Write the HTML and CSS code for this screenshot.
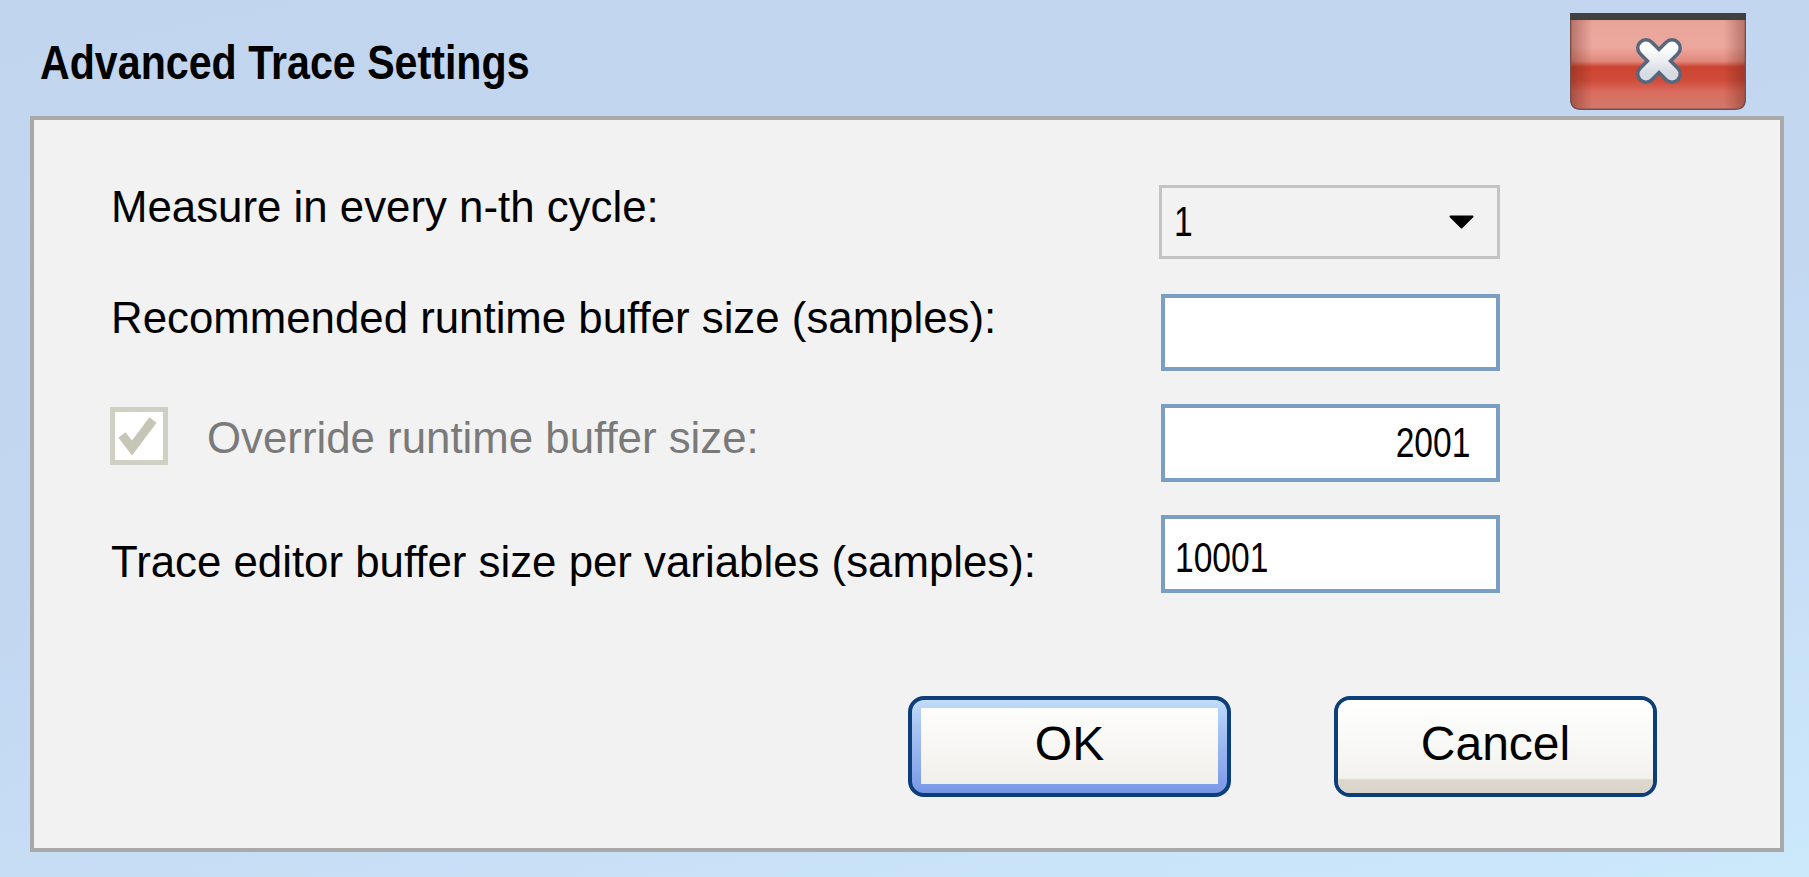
FILE: index.html
```html
<!DOCTYPE html>
<html lang="en">
<head>
<meta charset="utf-8">
<title>Advanced Trace Settings</title>
<link rel="stylesheet" href="styles.css">
</head>
<body>
<div class="window">
  <header class="titlebar">
    <h1 class="title">Advanced Trace Settings</h1>
    <button class="close" type="button" aria-label="Close">
      <svg width="176" height="97" viewBox="0 0 176 97">
        <defs>
          <linearGradient id="cb" x1="0" y1="0" x2="0" y2="1">
            <stop offset="0" stop-color="#d98a80"/>
            <stop offset="0.1" stop-color="#eaa59b"/>
            <stop offset="0.35" stop-color="#eda89e"/>
            <stop offset="0.5" stop-color="#e28a7e"/>
            <stop offset="0.56" stop-color="#cc4431"/>
            <stop offset="0.7" stop-color="#cf4c3a"/>
            <stop offset="0.82" stop-color="#da6c5e"/>
            <stop offset="1" stop-color="#d07a6c"/>
          </linearGradient>
          <linearGradient id="cv" x1="0" y1="0" x2="1" y2="0">
            <stop offset="0" stop-color="#5a1a10" stop-opacity="0.35"/>
            <stop offset="0.12" stop-color="#5a1a10" stop-opacity="0"/>
            <stop offset="0.88" stop-color="#5a1a10" stop-opacity="0"/>
            <stop offset="1" stop-color="#5a1a10" stop-opacity="0.35"/>
          </linearGradient>
          <linearGradient id="xg" x1="0" y1="0" x2="0" y2="1">
            <stop offset="0" stop-color="#ffffff"/>
            <stop offset="1" stop-color="#d6dae2"/>
          </linearGradient>
        </defs>
        <path d="M0.75 0 H175.25 V86 Q175.25 96.25 165 96.25 H11 Q0.75 96.25 0.75 86 Z" fill="url(#cb)" stroke="#7a4c46" stroke-width="1.5"/>
        <path d="M1.5 0 H174.5 V86 Q174.5 95.5 165 95.5 H11 Q1.5 95.5 1.5 86 Z" fill="url(#cv)"/>
        <rect x="0" y="0" width="176" height="7" fill="#404040"/>
        <g stroke-linecap="round" fill="none">
          <path d="M76 35 L102 61 M102 35 L76 61" stroke="#56667c" stroke-width="20"/>
          <path d="M76 35 L102 61 M102 35 L76 61" stroke="url(#xg)" stroke-width="13"/>
        </g>
      </svg>
    </button>
  </header>

  <main class="panel">
    <div class="form">
      <div class="row row-cycle">
        <span class="label">Measure in every n-th cycle:</span>
        <div class="select">
          <span class="narrow">1</span>
          <svg class="caret" width="25" height="14" viewBox="0 0 25 14"><path d="M1.5 1.5 H23.5 L12.5 12.5 Z" fill="#000" stroke="#000" stroke-width="2" stroke-linejoin="round"/></svg>
        </div>
      </div>

      <div class="row row-recommended">
        <span class="label label-recommended">Recommended runtime buffer size (samples):</span>
        <div class="field field-short"></div>
      </div>

      <div class="row row-override">
        <div class="check-label">
          <span class="checkbox">
            <svg width="48" height="48" viewBox="0 0 48 48"><path d="M7 23 L17 36 L38 8" fill="none" stroke="#c6c6b7" stroke-width="9" stroke-linejoin="miter"/></svg>
          </span>
          <span class="label label-disabled">Override runtime buffer size:</span>
        </div>
        <div class="field field-right"><span class="narrow narrow-right">2001</span></div>
      </div>

      <div class="row row-editor">
        <span class="label label-editor">Trace editor buffer size per variables (samples):</span>
        <div class="field field-low"><span class="narrow">10001</span></div>
      </div>
    </div>

    <div class="actions">
      <button class="btn btn-default" type="button"><span class="face">OK</span></button>
      <button class="btn" type="button"><span class="face">Cancel</span></button>
    </div>
  </main>
</div>
</body>
</html>
```

FILE: styles.css
```css
html, body {
  margin: 0;
  padding: 0;
}

body {
  width: 1809px;
  height: 877px;
  overflow: hidden;
  background: linear-gradient(168deg, #c1d5ef 0%, #c3d7f1 50%, #c8e1f7 80%, #cce8fb 100%);
  font-family: "Liberation Sans", Arial, sans-serif;
  color: #000;
}

.window {
  display: flex;
  flex-direction: column;
  height: 100%;
}

.titlebar {
  height: 116px;
  display: flex;
  justify-content: space-between;
  align-items: flex-start;
  padding: 0 63px 0 40px;
  box-sizing: border-box;
}

.title {
  margin: 38px 0 0 0;
  font-family: "Liberation Sans", Arial, sans-serif;
  font-weight: 700;
  font-size: 49px;
  line-height: 49px;
  white-space: nowrap;
  transform: scaleX(0.84);
  transform-origin: left center;
}

.close {
  margin-top: 13px;
  padding: 0;
  border: 0;
  background: none;
  width: 176px;
  height: 97px;
  display: block;
}

.close svg {
  display: block;
}

.panel {
  margin: 0 25px 0 30px;
  height: 736px;
  box-sizing: border-box;
  border: 4px solid #a9a9a9;
  background: #f2f2f2;
  padding: 65px 123px 51px 77px;
  display: flex;
  flex-direction: column;
}

.form {
  margin-right: 157px;
  display: flex;
  flex-direction: column;
}

.row {
  display: flex;
  justify-content: space-between;
  align-items: flex-start;
}

.row-cycle { margin-bottom: 35px; }
.row-recommended { margin-bottom: 33px; }
.row-override { margin-bottom: 33px; }

.label {
  font-size: 43.8px;
  line-height: 44px;
  white-space: nowrap;
}

.label-recommended { margin-top: 2px; }
.label-editor { margin-top: 25px; }

.label-disabled {
  color: #7a7a7a;
  margin-top: 12px;
}

.check-label {
  display: flex;
  align-items: flex-start;
  gap: 39px;
  margin-left: -1px;
}

.checkbox {
  margin-top: 3px;
  width: 58px;
  height: 58px;
  box-sizing: border-box;
  border: 5px solid #cfcfc3;
  background: #ffffff;
  display: flex;
  align-items: center;
  justify-content: center;
}

.checkbox svg {
  display: block;
}

.select {
  width: 341px;
  height: 74px;
  box-sizing: border-box;
  border: 3px solid #c3c3c3;
  background: #f2f2f2;
  display: flex;
  align-items: center;
  justify-content: space-between;
  padding: 0 23px 0 12px;
}

.narrow {
  display: inline-block;
  font-size: 42px;
  line-height: 42px;
  color: #000;
  transform: scaleX(0.8);
  transform-origin: left center;
}

.narrow-right {
  transform-origin: right center;
}

.caret {
  display: block;
}

.field {
  width: 339px;
  height: 78px;
  box-sizing: border-box;
  border: 4px solid #7b9fc3;
  background: #ffffff;
  padding: 2px 10px 0 10px;
  display: flex;
  align-items: center;
}

.field-short { height: 77px; }

.field-low { padding-top: 7px; }

.field-right {
  justify-content: flex-end;
  padding-right: 26px;
  padding-top: 0;
}

.actions {
  margin-top: 103px;
  display: flex;
  justify-content: flex-end;
  gap: 103px;
}

.btn {
  width: 323px;
  height: 101px;
  box-sizing: border-box;
  border: 4px solid #0c3e79;
  border-radius: 16px;
  padding: 0;
  background: #f4f3ef;
  display: flex;
  overflow: hidden;
  font-family: "Liberation Sans", Arial, sans-serif;
}

.face {
  flex: 1;
  display: flex;
  align-items: center;
  justify-content: center;
  font-size: 48px;
  color: #000;
  padding-bottom: 6px;
  background: linear-gradient(to bottom, #ffffff 0%, #f9f9f8 40%, #f3f2ee 84%, #ddd7cd 86%, #d9d3c9 100%);
}

.btn-default {
  padding: 8px 9px 9px 9px;
  background: linear-gradient(to bottom, #c2dbf9 0%, #a8c4f4 30%, #8eaced 70%, #7896e6 100%);
}

.btn-default .face {
  padding-bottom: 5px;
  background: linear-gradient(to bottom, #fdfdfc 0%, #f8f7f4 50%, #f1efea 100%);
}
```
